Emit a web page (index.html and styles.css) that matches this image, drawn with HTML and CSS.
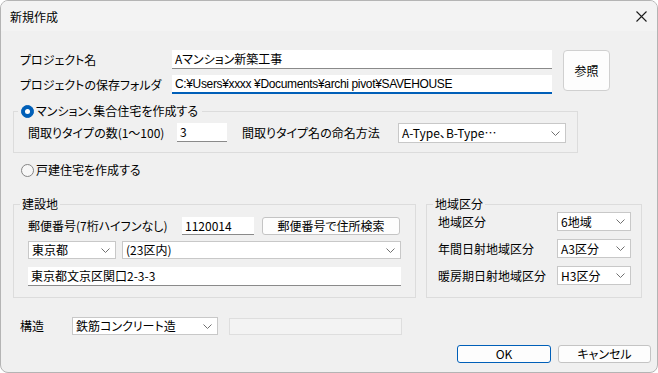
FILE: index.html
```html
<!DOCTYPE html>
<html lang="ja">
<head>
<meta charset="utf-8">
<title>新規作成</title>
<link rel="stylesheet" href="styles.css">
</head>
<body>
<div class="window">
  <div class="titlebar">
    <span class="title">新規作成</span>
    <span class="close"><svg width="11" height="11" viewBox="0 0 11 11"><path d="M0.5 0.5 L10.5 10.5 M10.5 0.5 L0.5 10.5" stroke="#1b1b1b" stroke-width="1.1" fill="none"/></svg></span>
  </div>
  <div class="body">
    <div class="project">
      <div class="project-fields">
        <div class="prow"><span class="plabel">プロジェクト名</span><div class="tb">Aマンション新築工事</div></div>
        <div class="prow"><span class="plabel">プロジェクトの保存フォルダ</span><div class="tb focused path">C:¥Users¥xxxx ¥Documents¥archi pivot¥SAVEHOUSE</div></div>
      </div>
      <div class="btn browse">参照</div>
    </div>

    <fieldset class="group mansion">
      <legend><span class="radio-label"><span class="radio on"></span>マンション、集合住宅を作成する</span></legend>
      <div class="mrow">
        <span class="mlabel1">間取りタイプの数(1～100)</span>
        <div class="tb num">3</div>
        <span class="mlabel2">間取りタイプ名の命名方法</span>
        <div class="combo naming"><span>A-Type、B-Type…</span><svg class="chev" width="9" height="5" viewBox="0 0 9 5"><polyline points="0.5,0.5 4.5,4.5 8.5,0.5" fill="none" stroke="#707070" stroke-width="1"/></svg></div>
      </div>
    </fieldset>

    <div class="radio-row"><span class="radio"></span>戸建住宅を作成する</div>

    <div class="groups">
      <fieldset class="group site">
        <legend>建設地</legend>
        <div class="srow">
          <span class="zlabel">郵便番号(7桁ハイフンなし)</span>
          <div class="tb zip">1120014</div>
          <div class="btn search">郵便番号で住所検索</div>
        </div>
        <div class="srow gapb">
          <div class="combo pref"><span>東京都</span><svg class="chev" width="9" height="5" viewBox="0 0 9 5"><polyline points="0.5,0.5 4.5,4.5 8.5,0.5" fill="none" stroke="#707070" stroke-width="1"/></svg></div>
          <div class="combo city"><span>(23区内)</span><svg class="chev" width="9" height="5" viewBox="0 0 9 5"><polyline points="0.5,0.5 4.5,4.5 8.5,0.5" fill="none" stroke="#707070" stroke-width="1"/></svg></div>
        </div>
        <div class="srow gapc">
          <div class="tb address">東京都文京区関口2-3-3</div>
        </div>
      </fieldset>

      <fieldset class="group region">
        <legend>地域区分</legend>
        <div class="rrow">
          <span class="rlabel">地域区分</span>
          <div class="combo rsel"><span>6地域</span><svg class="chev" width="9" height="5" viewBox="0 0 9 5"><polyline points="0.5,0.5 4.5,4.5 8.5,0.5" fill="none" stroke="#707070" stroke-width="1"/></svg></div>
        </div>
        <div class="rrow">
          <span class="rlabel">年間日射地域区分</span>
          <div class="combo rsel"><span>A3区分</span><svg class="chev" width="9" height="5" viewBox="0 0 9 5"><polyline points="0.5,0.5 4.5,4.5 8.5,0.5" fill="none" stroke="#707070" stroke-width="1"/></svg></div>
        </div>
        <div class="rrow">
          <span class="rlabel">暖房期日射地域区分</span>
          <div class="combo rsel"><span>H3区分</span><svg class="chev" width="9" height="5" viewBox="0 0 9 5"><polyline points="0.5,0.5 4.5,4.5 8.5,0.5" fill="none" stroke="#707070" stroke-width="1"/></svg></div>
        </div>
      </fieldset>
    </div>

    <div class="structure">
      <span class="stlabel">構造</span>
      <div class="combo stsel"><span>鉄筋コンクリート造</span><svg class="chev" width="9" height="5" viewBox="0 0 9 5"><polyline points="0.5,0.5 4.5,4.5 8.5,0.5" fill="none" stroke="#707070" stroke-width="1"/></svg></div>
      <div class="disabled-box"></div>
    </div>

    <div class="actions">
      <div class="btn ok">OK</div>
      <div class="btn cancel">キャンセル</div>
    </div>
  </div>
</div>
</body>
</html>
```

FILE: styles.css
```css
html, body {
  margin: 0;
  padding: 0;
  background: #ffffff;
}

.window {
  width: 658px;
  height: 373px;
  box-sizing: border-box;
  border: 1px solid #b4b4b4;
  border-radius: 8px;
  background: #f0f0f0;
  overflow: hidden;
  font-family: "Noto Sans CJK JP", "Noto Sans", sans-serif;
  font-size: 12px;
  line-height: 16px;
  font-feature-settings: "palt";
  color: #000;
}

.titlebar {
  height: 30px;
  box-sizing: border-box;
  background: #f3f3f3;
  display: flex;
  align-items: center;
  justify-content: space-between;
  padding: 1px 10px 0 9px;
}

.title {
  font-size: 12px;
}

.close {
  display: flex;
  align-items: center;
}

.body {
  padding-top: 19px;
}

/* top project section */
.project {
  display: flex;
  align-items: flex-start;
  padding-left: 19px;
}

.project-fields {
  width: 532px;
  display: flex;
  flex-direction: column;
  gap: 6px;
}

.prow {
  display: flex;
  align-items: center;
  height: 19px;
}

.plabel {
  width: 152px;
  flex: none;
}

.tb {
  flex: 1;
  height: 19px;
  box-sizing: border-box;
  background: #fff;
  border-bottom: 1px solid #8a8a8a;
  padding: 1px 3px 0 3px;
  line-height: 16px;
  white-space: nowrap;
  overflow: hidden;
}

.tb.focused {
  border-bottom: 2px solid #005fb8;
}

.tb.path {
  font-family: "Liberation Sans", "Noto Sans CJK JP", sans-serif;
  letter-spacing: -0.35px;
}

.btn {
  box-sizing: border-box;
  background: #fdfdfd;
  border: 1px solid #d0d0d0;
  border-radius: 4px;
  display: flex;
  align-items: center;
  justify-content: center;
  flex: none;
}

.browse {
  width: 47px;
  height: 41px;
  margin-left: 11px;
}

/* group boxes */
.group {
  margin: 0;
  padding: 0;
  border: 1px solid #dcdcdc;
  min-width: 0;
  box-sizing: border-box;
}

.group legend {
  padding: 0 2px;
  line-height: 16px;
  height: 16px;
}

.mansion {
  margin: 9px 0 0 12px;
  width: 565px;
  padding: 4px 0 9px 4px;
}

.mansion legend {
  padding: 0 4px 0 3px;
}

.radio-label {
  display: flex;
  align-items: center;
  height: 16px;
}

.radio {
  width: 13px;
  height: 13px;
  box-sizing: border-box;
  border-radius: 50%;
  border: 1px solid #858585;
  background: #f7f7f7;
  margin-right: 2px;
  flex: none;
}

.radio.on {
  background: #005fb8;
  border-color: #005fb8;
}

.radio.on::after {
  content: "";
  display: block;
  width: 5px;
  height: 5px;
  margin: 3px;
  border-radius: 50%;
  background: #fff;
}

.mrow {
  display: flex;
  align-items: flex-start;
  height: 20px;
  margin-left: 10px;
}

.mrow > span {
  line-height: 19px;
}

.mlabel1 {
  width: 149px;
  flex: none;
}

.tb.num {
  flex: none;
  width: 50px;
}

.mlabel2 {
  width: 156px;
  margin-left: 15px;
  flex: none;
}

.combo {
  display: flex;
  align-items: center;
  justify-content: space-between;
  box-sizing: border-box;
  background: #fff;
  border: 1px solid #c8c8c8;
  padding: 0 5px 0 3px;
  flex: none;
  white-space: nowrap;
}

.chev {
  flex: none;
}

.naming {
  width: 168px;
  height: 20px;
}

.radio-row {
  display: flex;
  align-items: center;
  height: 16px;
  margin: 9px 0 0 20px;
}

.groups {
  display: flex;
  gap: 10px;
  margin: 18px 0 0 12px;
}

.site {
  width: 403px;
  padding: 5px 0 11px 6px;
}

.srow {
  display: flex;
  align-items: center;
  padding-left: 8px;
}

.srow.gapb {
  margin-top: 6px;
  gap: 6px;
}

.srow.gapc {
  margin-top: 8px;
}

.zlabel {
  width: 154px;
  flex: none;
}

.tb.zip {
  flex: none;
  width: 72px;
  height: 18px;
}

.search {
  width: 138px;
  height: 18px;
  margin-left: 8px;
  border-color: #c4c4c4;
  border-radius: 3px;
}

.pref {
  width: 88px;
  height: 18px;
}

.city {
  width: 279px;
  height: 18px;
}

.tb.address {
  flex: none;
  width: 373px;
  height: 19px;
}

.region {
  width: 216px;
  padding: 0 0 10px 6px;
}

.rrow {
  display: flex;
  align-items: center;
  height: 19px;
  padding-left: 5px;
}

.rrow + .rrow {
  margin-top: 8px;
}

.rlabel {
  width: 119px;
  flex: none;
}

.rsel {
  width: 74px;
  height: 19px;
}

.structure {
  display: flex;
  align-items: center;
  height: 18px;
  margin: 19px 0 0 19px;
}

.stlabel {
  width: 52px;
  flex: none;
}

.stsel {
  width: 146px;
  height: 18px;
}

.disabled-box {
  width: 173px;
  height: 17px;
  box-sizing: border-box;
  margin-left: 11px;
  background: #f3f3f3;
  border: 1px solid #dedede;
}

.actions {
  display: flex;
  justify-content: flex-end;
  gap: 7px;
  margin-top: 10px;
  padding-right: 6px;
}

.ok {
  width: 94px;
  height: 18px;
  border-color: #005fb8;
  border-radius: 3px;
}

.cancel {
  width: 93px;
  height: 18px;
  border-color: #c4c4c4;
  border-radius: 3px;
}
```
